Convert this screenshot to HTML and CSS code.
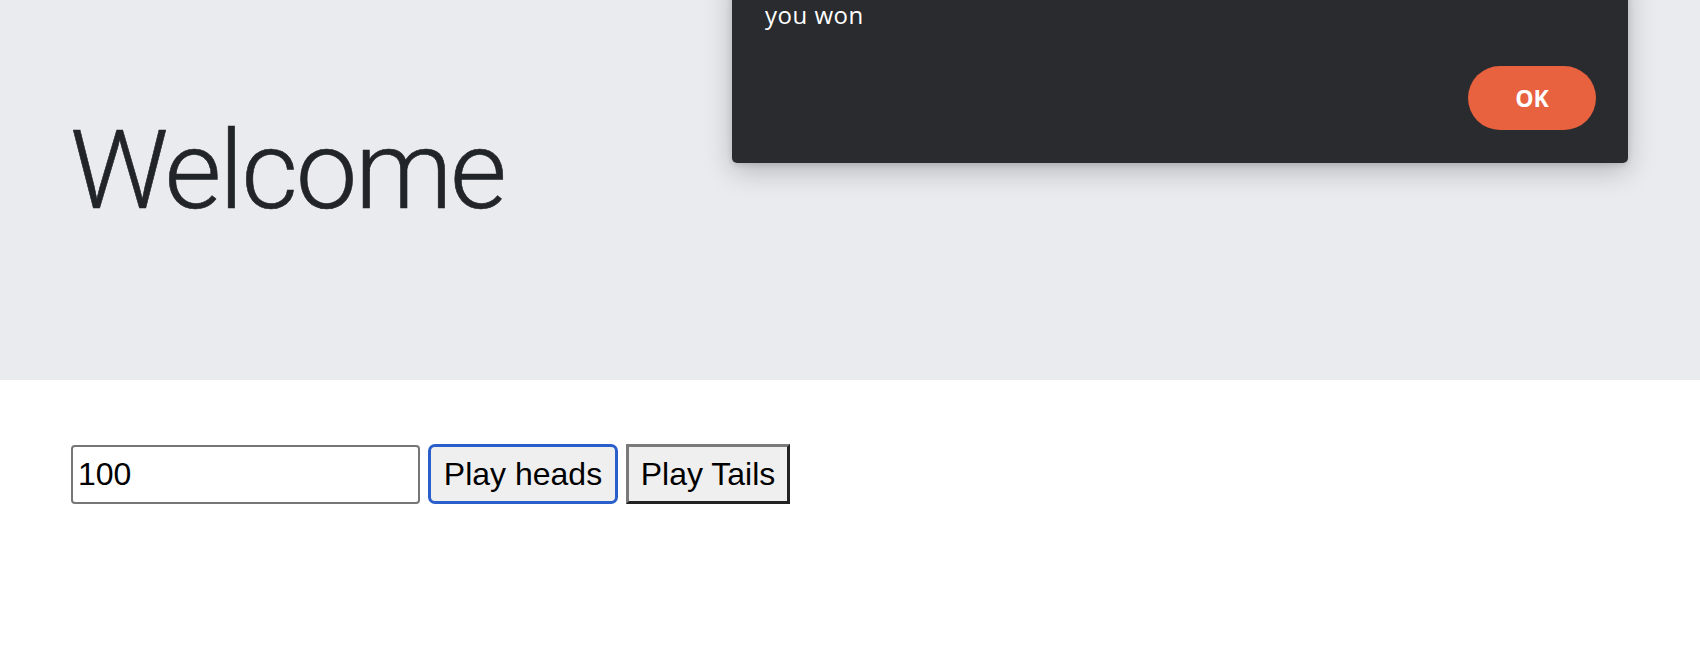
FILE: index.html
```html
<!DOCTYPE html>
<html>
<head>
<meta charset="utf-8">
<link rel="stylesheet" href="styles.css">
</head>
<body>
<header class="jumbo">
  <h1 class="title">Welcome</h1>
</header>
<main class="content">
  <div class="play-row">
    <input class="amount" type="text" value="100">
    <button class="btn btn-heads">Play heads</button>
    <button class="btn btn-tails">Play Tails</button>
  </div>
</main>
<div class="dialog">
  <p class="dialog-msg">you won</p>
  <div class="dialog-actions">
    <button class="dialog-ok">OK</button>
  </div>
</div>
</body>
</html>
```
FILE: styles.css
```css
html, body {
  margin: 0;
  padding: 0;
  background: #ffffff;
}
body {
  width: 1700px;
  height: 660px;
  overflow: hidden;
  position: relative;
  font-family: "Liberation Sans", Arial, sans-serif;
}
.jumbo {
  background: #e9ebef;
  height: 380px;
  box-sizing: border-box;
  padding: 105px 70px 0 70px;
}
.title {
  margin: 0;
  font-family: Roboto, "Liberation Sans", sans-serif;
  font-weight: 300;
  font-size: 110px;
  line-height: 132px;
  letter-spacing: -2.4px;
  color: #212529;
  -webkit-text-stroke: 0.6px #212529;
}
.content {
  padding: 64px 70px 0 71px;
}
.play-row {
  display: flex;
  align-items: flex-start;
  gap: 8px;
}
.amount {
  box-sizing: border-box;
  width: 349px;
  height: 59px;
  margin-top: 1px;
  border: 2px solid #767676;
  border-radius: 4px;
  padding: 0 5px;
  font-family: "Liberation Sans", Arial, sans-serif;
  font-size: 32px;
  color: #000;
  background: #fff;
  outline: none;
}
.btn {
  box-sizing: border-box;
  height: 60px;
  background: #efefef;
  font-family: "Liberation Sans", Arial, sans-serif;
  font-size: 32px;
  color: #000;
  padding: 0;
  margin: 0;
  line-height: 1;
  white-space: nowrap;
  text-align: center;
}
.btn-heads {
  width: 190px;
  border: 3px solid #2a5ecb;
  border-radius: 7px;
}
.btn-tails {
  width: 164px;
  border-style: solid;
  border-width: 3px;
  border-color: #7a7a7a #222222 #222222 #7a7a7a;
  border-radius: 0;
}
.dialog {
  position: absolute;
  left: 732px;
  top: -32px;
  width: 896px;
  box-sizing: border-box;
  background: #2a2b2f;
  border-radius: 0 0 5px 5px;
  padding: 32px 32px 33px 33px;
  box-shadow: 0 8px 28px rgba(0, 0, 0, 0.22), 0 2px 6px rgba(0, 0, 0, 0.12);
}
.dialog-msg {
  margin: 0;
  font-family: "Open Sans", "Liberation Sans", sans-serif;
  font-size: 24px;
  line-height: 30px;
  letter-spacing: 0.5px;
  color: #ffffff;
}
.dialog-actions {
  display: flex;
  justify-content: flex-end;
  margin-top: 36px;
}
.dialog-ok {
  width: 128px;
  height: 64px;
  border: none;
  border-radius: 32px;
  background: #e8623f;
  color: #ffffff;
  font-family: "Open Sans", "Liberation Sans", sans-serif;
  font-weight: 700;
  font-size: 23px;
  padding: 0;
}
```
